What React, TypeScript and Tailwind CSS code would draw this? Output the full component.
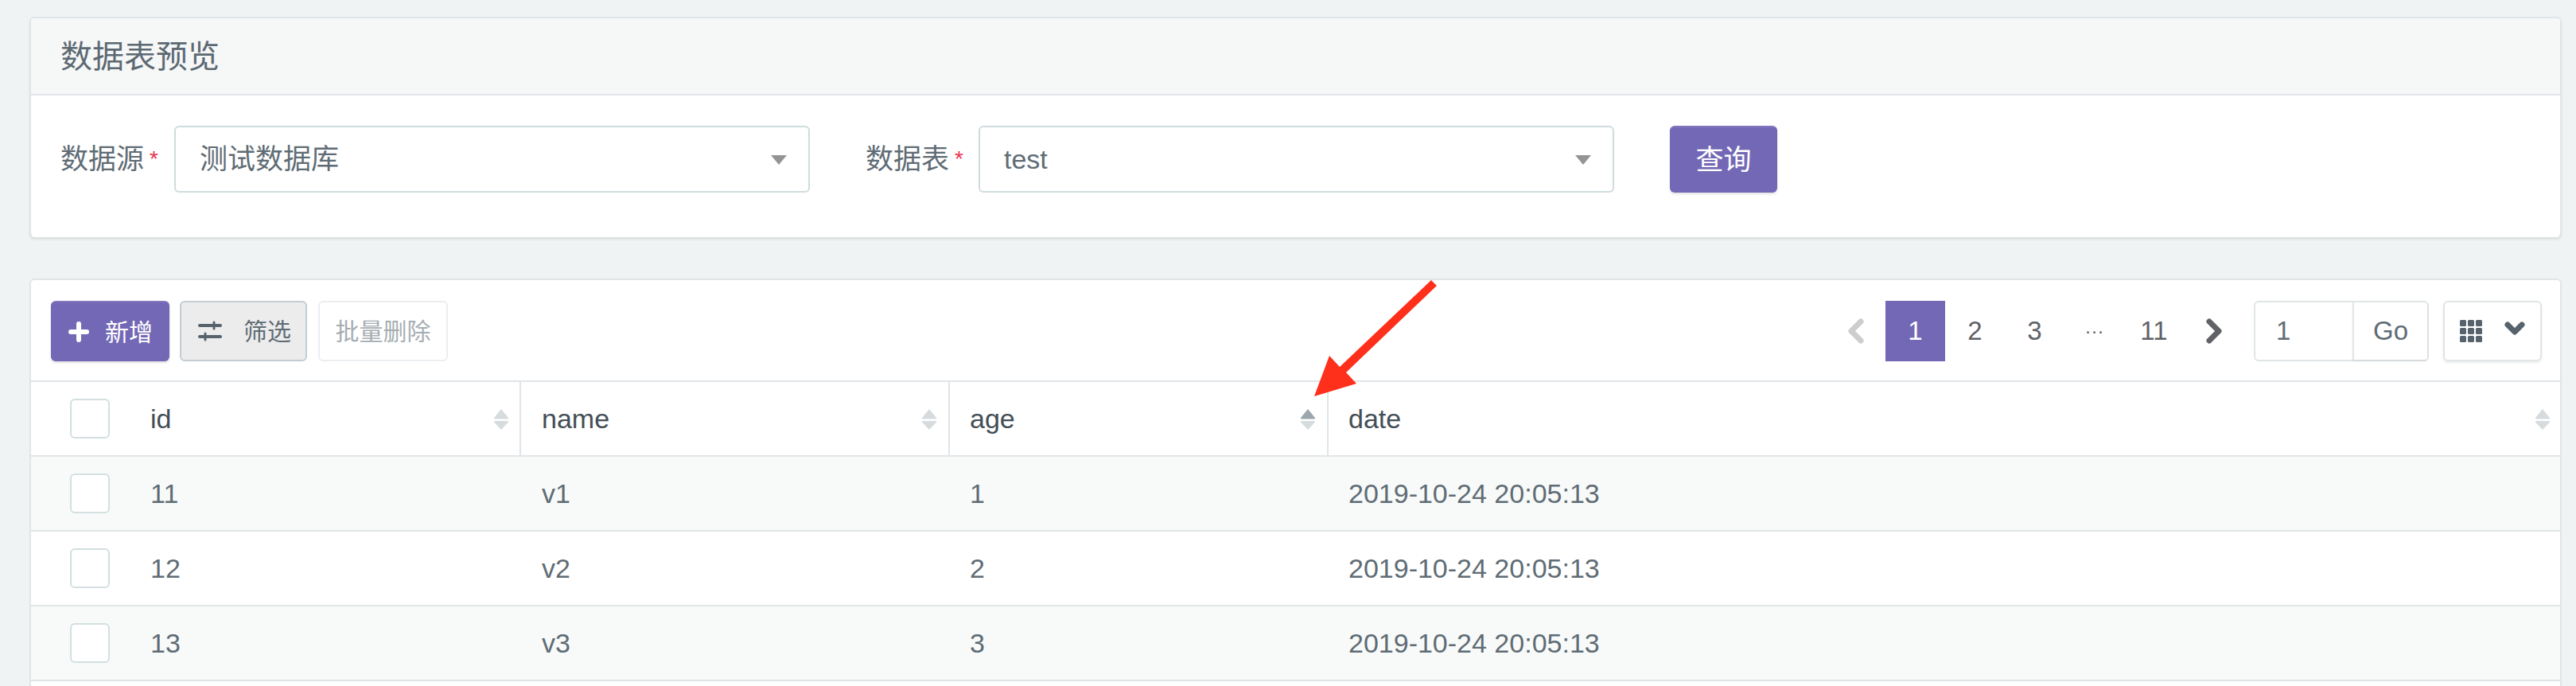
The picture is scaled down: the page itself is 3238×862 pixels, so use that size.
const rows = [
  { id: '11', name: 'v1', age: '1', striped: true },
  { id: '12', name: 'v2', age: '2', striped: false },
  { id: '13', name: 'v3', age: '3', striped: true },
];

function Caret() {
  return (
    <svg width="22" height="13" viewBox="0 0 22 13" className="shrink-0">
      <path d="M1 1h20L11 13z" fill="#949494" />
    </svg>
  );
}

function FormItem({ label, value, labelWidth }: { label: string; value: string; labelWidth: string }) {
  return (
    <div className="flex items-center">
      <div className={`flex items-center text-[35px] text-[#5f6c75] ${labelWidth}`}>
        <span>{label}</span>
        <span className="ml-[7px] text-[28px] leading-none text-[#e8364f]">*</span>
      </div>
      <div className="flex h-[84px] w-[799px] items-center justify-between rounded-[6px] border-2 border-[#cfdcdd] bg-white pl-[30px] pr-[26px]">
        <span className={value === 'test' ? 'text-[34px] text-[#5f6c75]' : 'text-[35px] text-[#5f6c75]'}>{value}</span>
        <Caret />
      </div>
    </div>
  );
}

function SortIcon({ active }: { active?: boolean }) {
  return (
    <svg width="22" height="27" viewBox="0 0 20 27" className="shrink-0">
      <path
        d="M10 1 19 12a1 1 0 0 1-1 1.500H2A1 1 0 0 1 1 12z"
        fill={active ? '#9ba6ad' : '#d6dcde'}
      />
      <path d="M2 16h16a1 1 0 0 1 1 1.500L10 27 1 17.500A1 1 0 0 1 2 16z" fill="#d6dcde" />
    </svg>
  );
}

function PageItem({ children, active }: { children: React.ReactNode; active?: boolean }) {
  return (
    <div
      className={`flex h-[76px] w-[75px] items-center justify-center text-[33px] ${
        active ? 'bg-[#7368b5] text-white' : 'text-[#606266]'
      }`}
    >
      {children}
    </div>
  );
}

export default function App() {
  return (
    <div className="relative h-[862px] w-[3238px] overflow-hidden bg-[#eff3f4] pl-[37px] pr-[18px] pt-[21px] [font-family:'Liberation_Sans','Noto_Sans_CJK_SC',sans-serif]">
      {/* query card */}
      <div className="h-[277px] overflow-hidden rounded-[6px] border-2 border-[#e0e5e8] border-b-0 bg-white shadow-[0_3px_3px_rgba(0,0,0,0.08)]">
        <div className="flex h-[97px] items-center border-b-2 border-[#e0e5e8] bg-[#f6f7f7] pl-[37px] text-[40px] text-[#5c6972]">
          数据表预览
        </div>
        <div className="flex items-center pl-[37px] pt-[38px]">
          <FormItem label="数据源" value="测试数据库" labelWidth="w-[143px]" />
          <div className="ml-[70px]">
            <FormItem label="数据表" value="test" labelWidth="w-[142px]" />
          </div>
          <button className="ml-[70px] h-[84px] w-[135px] rounded-[6px] border-t-2 border-[#8277bf] bg-[#7368b5] text-[35px] text-white shadow-[0_2px_3px_rgba(0,0,0,0.12)]">
            查询
          </button>
        </div>
      </div>

      {/* table card */}
      <div className="mt-[52px] h-[600px] overflow-hidden rounded-t-[6px] border-2 border-b-0 border-[#e0e5e8] bg-white">
        <div className="flex h-[128px] items-start justify-between border-b-2 border-[#e0e5e8] pl-[25px] pr-[23px] pt-[26px]">
          <div className="flex">
            <button className="flex h-[76px] w-[149px] items-center rounded-[6px] border-t-2 border-[#8277bf] bg-[#7368b5] pl-[22px] text-[30px] text-white shadow-[0_2px_3px_rgba(0,0,0,0.12)]">
              <svg width="26" height="26" viewBox="0 0 26 26" className="shrink-0">
                <path d="M13 3v20M3 13h20" stroke="#fff" strokeWidth="6" strokeLinecap="round" />
              </svg>
              <span className="ml-[20px]">新增</span>
            </button>
            <button className="ml-[13px] flex h-[76px] w-[160px] items-center rounded-[6px] border-2 border-[#c3cdd3] bg-[#ececec] pl-[21px] text-[30px] text-[#5f6c75]">
              <svg width="30" height="26" viewBox="0 0 30 26" className="shrink-0">
                <path d="M2 6h26M2 20h26" stroke="#56636c" strokeWidth="4" strokeLinecap="round" />
                <path d="M20 2v8M9 16v8" stroke="#56636c" strokeWidth="3" strokeLinecap="round" />
              </svg>
              <span className="ml-[27px]">筛选</span>
            </button>
            <button className="ml-[14px] flex h-[76px] w-[163px] items-center justify-center rounded-[6px] border-2 border-[#ebeef1] bg-white text-[30px] text-[#a6adb2]">
              批量删除
            </button>
          </div>
          <div className="flex">
            <PageItem>
              <svg width="22" height="32" viewBox="0 0 22 32">
                <path d="M17 4 5 16l12 12" fill="none" stroke="#cdcdcd" strokeWidth="7" strokeLinecap="round" strokeLinejoin="round" />
              </svg>
            </PageItem>
            <PageItem active>1</PageItem>
            <PageItem>2</PageItem>
            <PageItem>3</PageItem>
            <PageItem>
              <span className="text-[24px]">···</span>
            </PageItem>
            <PageItem>11</PageItem>
            <PageItem>
              <svg width="22" height="32" viewBox="0 0 22 32">
                <path d="M5 4l12 12L5 28" fill="none" stroke="#606266" strokeWidth="7" strokeLinecap="round" strokeLinejoin="round" />
              </svg>
            </PageItem>
            <div className="ml-[13px] flex h-[76px] w-[220px] rounded-[6px] border-2 border-[#e0e5e8] text-[33px] text-[#5f6c75]">
              <div className="flex w-[122px] items-center pl-[26px]">1</div>
              <div className="flex flex-1 items-center justify-center border-l-2 border-[#e0e5e8] shadow-[0_2px_3px_rgba(0,0,0,0.06)]">
                Go
              </div>
            </div>
            <div className="ml-[18px] flex h-[76px] w-[124px] items-center rounded-[6px] border-2 border-[#e0e5e8] pl-[19px] shadow-[0_2px_3px_rgba(0,0,0,0.08)]">
              <svg width="28" height="28" viewBox="0 0 28 28" className="shrink-0" fill="#56636c">
                <rect x="0" y="0" width="8" height="8" rx="1.500" />
                <rect x="10" y="0" width="8" height="8" rx="1.500" />
                <rect x="20" y="0" width="8" height="8" rx="1.500" />
                <rect x="0" y="10" width="8" height="8" rx="1.500" />
                <rect x="10" y="10" width="8" height="8" rx="1.500" />
                <rect x="20" y="10" width="8" height="8" rx="1.500" />
                <rect x="0" y="20" width="8" height="8" rx="1.500" />
                <rect x="10" y="20" width="8" height="8" rx="1.500" />
                <rect x="20" y="20" width="8" height="8" rx="1.500" />
              </svg>
              <svg width="26" height="18" viewBox="0 0 26 18" className="ml-[28px] -mt-[6px] shrink-0">
                <path d="M4 4l9 9 9-9" fill="none" stroke="#56636c" strokeWidth="7" strokeLinecap="round" strokeLinejoin="round" />
              </svg>
            </div>
          </div>
        </div>

        {/* table header */}
        <div className="flex h-[94px] border-b-2 border-[#e0e5e8] text-[34px] text-[#434e56]">
          <div className="flex w-[616px] items-center border-r-2 border-[#e0e5e8] pl-[49px] pr-[12px]">
            <div className="h-[50px] w-[50px] rounded-[6px] border-2 border-[#d3dfe1] bg-white" />
            <span className="ml-[51px] flex-1">id</span>
            <SortIcon />
          </div>
          <div className="flex w-[539px] items-center justify-between border-r-2 border-[#e0e5e8] pl-[26px] pr-[13px]">
            <span>name</span>
            <SortIcon />
          </div>
          <div className="flex w-[476px] items-center justify-between border-r-2 border-[#e0e5e8] pl-[25px] pr-[13px]">
            <span>age</span>
            <SortIcon active />
          </div>
          <div className="flex flex-1 items-center justify-between pl-[25px] pr-[11px]">
            <span>date</span>
            <SortIcon />
          </div>
        </div>

        {/* table rows */}
        {rows.map((row) => (
          <div
            key={row.id}
            className={`flex h-[94px] items-center border-b-2 border-[#e0e5e8] text-[34px] text-[#5f6c75] ${
              row.striped ? 'bg-[#f8faf9]' : 'bg-white'
            }`}
          >
            <div className="flex w-[616px] items-center pl-[49px]">
              <div className="h-[50px] w-[50px] rounded-[6px] border-2 border-[#d3dfe1] bg-white" />
              <span className="ml-[51px]">{row.id}</span>
            </div>
            <div className="w-[539px] pl-[26px]">{row.name}</div>
            <div className="w-[476px] pl-[25px]">{row.age}</div>
            <div className="flex-1 pl-[25px]">2019-10-24 20:05:13</div>
          </div>
        ))}
      </div>

      {/* annotation arrow */}
      <svg width="180" height="170" viewBox="0 0 180 170" className="pointer-events-none absolute left-[1640px] top-[340px]">
        <path d="M12 158 31 107 44 121 159 12 166 19 52 128 65 142z" fill="#fe2f1b" />
      </svg>
    </div>
  );
}
